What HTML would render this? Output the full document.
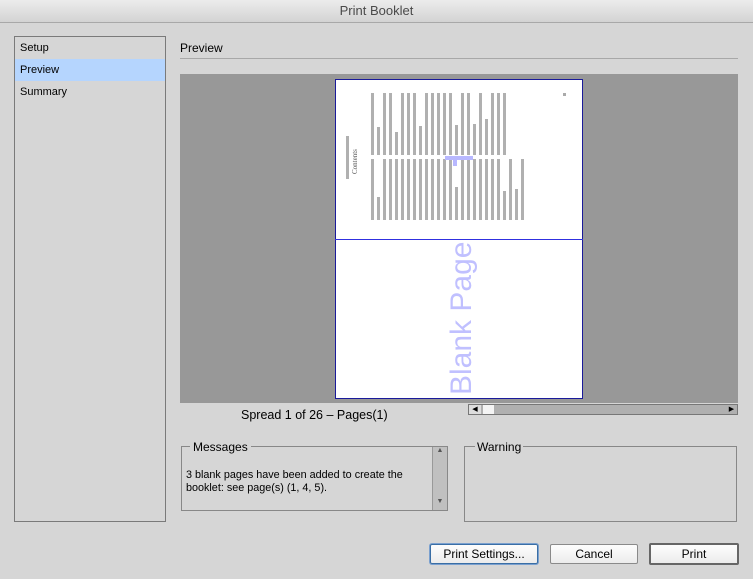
<!DOCTYPE html>
<html><head><style>
body{margin:0;width:753px;height:579px;background:#d6d6d6;font-family:"Liberation Sans",sans-serif;font-size:11px;color:#000;position:relative;overflow:hidden}
.abs{position:absolute}
.title{left:0;top:0;width:753px;height:22px;background:linear-gradient(#ececec,#d3d3d3);border-bottom:1px solid #a8a8a8;text-align:center;line-height:22px;font-size:13px;color:#4a4a4a}
.side{left:14px;top:36px;width:150px;height:484px;border:1px solid #7a7a7a;background:#d6d6d6}
.side div{height:22px;line-height:23px;padding-left:5px}
.btn{height:18px;border:1px solid #8a8a8a;background:linear-gradient(#fdfdfd,#ececec);text-align:center;line-height:18px;font-size:12px;border-radius:2px}
</style></head><body>
<div class="abs title">Print Booklet</div>
<div class="abs side"><div>Setup</div><div style="background:#b5d5fe">Preview</div><div>Summary</div></div>
<div class="abs" style="left:180px;top:41px;font-size:12px">Preview</div>
<div class="abs" style="left:180px;top:58px;width:558px;height:1px;background:#a8a8a8"></div>
<div class="abs" style="left:180px;top:74px;width:558px;height:329px;background:#989898"></div>
<svg class="abs" style="left:335px;top:79px" width="249" height="321">
<rect x="0.5" y="0.5" width="247" height="319" fill="#fff" stroke="#1a1a9a"/>
<line x1="0" y1="160.5" x2="248" y2="160.5" stroke="#3030e0"/>
<rect x="11" y="57" width="3" height="43" fill="#b0b0b0"/>
<text transform="translate(22,95) rotate(-90)" font-size="7" fill="#555" font-family="Liberation Serif">Contents</text>
<rect x="228" y="14" width="3" height="3" fill="#aaa"/>
<g fill="#b0b0b0">
<rect x="36" y="14" width="3" height="62"/><rect x="42" y="48" width="3" height="28"/><rect x="48" y="14" width="3" height="62"/><rect x="54" y="14" width="3" height="62"/><rect x="60" y="53" width="3" height="23"/><rect x="66" y="14" width="3" height="62"/><rect x="72" y="14" width="3" height="62"/><rect x="78" y="14" width="3" height="62"/><rect x="84" y="47" width="3" height="29"/><rect x="90" y="14" width="3" height="62"/><rect x="96" y="14" width="3" height="62"/><rect x="102" y="14" width="3" height="62"/><rect x="108" y="14" width="3" height="62"/><rect x="114" y="14" width="3" height="62"/><rect x="120" y="46" width="3" height="30"/><rect x="126" y="14" width="3" height="62"/><rect x="132" y="14" width="3" height="62"/><rect x="138" y="45" width="3" height="31"/><rect x="144" y="14" width="3" height="62"/><rect x="150" y="40" width="3" height="36"/><rect x="156" y="14" width="3" height="62"/><rect x="162" y="14" width="3" height="62"/><rect x="168" y="14" width="3" height="62"/>
<rect x="36" y="80" width="3" height="61"/><rect x="42" y="118" width="3" height="23"/><rect x="48" y="80" width="3" height="61"/><rect x="54" y="80" width="3" height="61"/><rect x="60" y="80" width="3" height="61"/><rect x="66" y="80" width="3" height="61"/><rect x="72" y="80" width="3" height="61"/><rect x="78" y="80" width="3" height="61"/><rect x="84" y="80" width="3" height="61"/><rect x="90" y="80" width="3" height="61"/><rect x="96" y="80" width="3" height="61"/><rect x="102" y="80" width="3" height="61"/><rect x="108" y="80" width="3" height="61"/><rect x="114" y="80" width="3" height="61"/><rect x="120" y="108" width="3" height="33"/><rect x="126" y="80" width="3" height="61"/><rect x="132" y="80" width="3" height="61"/><rect x="138" y="80" width="3" height="61"/><rect x="144" y="80" width="3" height="61"/><rect x="150" y="80" width="3" height="61"/><rect x="156" y="80" width="3" height="61"/><rect x="162" y="80" width="3" height="61"/><rect x="168" y="112" width="3" height="29"/><rect x="174" y="80" width="3" height="61"/><rect x="180" y="110" width="3" height="31"/><rect x="186" y="80" width="3" height="61"/>
</g>
<rect x="110" y="77" width="28" height="4" fill="#b8b8ff"/><rect x="118" y="77" width="4" height="10" fill="#b8b8ff"/>
<text transform="translate(136,316) rotate(-90)" font-size="30" fill="#c0c0ff">Blank Page</text>
</svg>
<div class="abs" style="left:241px;top:408px;font-size:12.5px">Spread 1 of 26 – Pages(1)</div>
<div class="abs" style="left:468px;top:404px;width:270px;height:11px;background:#b0b0b0;border:1px solid #777;box-sizing:border-box"></div>
<div class="abs" style="left:469px;top:405px;width:12px;height:9px;background:#ddd;font-size:7px;line-height:9px;text-align:center">◀</div>
<div class="abs" style="left:483px;top:405px;width:11px;height:9px;background:#f4f4f4"></div>
<div class="abs" style="left:726px;top:405px;width:11px;height:9px;font-size:7px;line-height:9px;text-align:center">▶</div>
<div class="abs" style="left:181px;top:446px;width:267px;height:65px;border:1px solid #888;box-sizing:border-box"></div>
<div class="abs" style="left:190px;top:440px;background:#d6d6d6;padding:0 3px;font-size:12px">Messages</div>
<div class="abs" style="left:432px;top:447px;width:14px;height:63px;background:#c0c0c0;border-left:1px solid #999;font-size:7px;color:#555;text-align:center">▲<div style="margin-top:44px">▼</div></div>
<div class="abs" style="left:186px;top:469px;line-height:13px;font-size:10.8px">3 blank pages have been added to create the<br>booklet: see page(s) (1, 4, 5).</div>
<div class="abs" style="left:464px;top:446px;width:273px;height:76px;border:1px solid #888;box-sizing:border-box"></div>
<div class="abs" style="left:475px;top:440px;background:#d6d6d6;padding:0 2px;font-size:12px">Warning</div>
<div class="abs btn" style="left:430px;top:544px;width:106px;border:1px solid #3a6ea5;box-shadow:0 0 0 1px #7aa0cf">Print Settings...</div>
<div class="abs btn" style="left:550px;top:544px;width:86px">Cancel</div>
<div class="abs btn" style="left:649px;top:543px;width:86px;border:2px solid #666">Print</div>
</body></html>
